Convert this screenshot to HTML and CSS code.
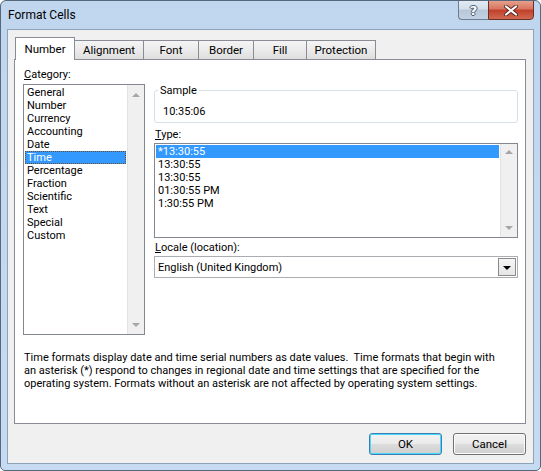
FILE: index.html
```html
<!DOCTYPE html>
<html>
<head>
<meta charset="utf-8">
<link rel="stylesheet" href="styles.css">
</head>
<body>
<div class="window">
  <div class="titlebar">
    <span class="title">Format Cells</span>
    <div class="caption-buttons">
      <span class="cap-btn help">?</span>
      <span class="cap-btn close">
        <svg width="16" height="11" viewBox="0 0 16 11">
          <path d="M3 1.5 L13 9.5 M13 1.5 L3 9.5" stroke="#5a2a22" stroke-width="4" stroke-linecap="round" fill="none"/>
          <path d="M3 1.5 L13 9.5 M13 1.5 L3 9.5" stroke="#ffffff" stroke-width="2.2" stroke-linecap="round" fill="none"/>
        </svg>
      </span>
    </div>
  </div>
  <div class="client">
    <div class="tabs">
      <span class="tab active w-number">Number</span>
      <span class="tab w-alignment">Alignment</span>
      <span class="tab w-font">Font</span>
      <span class="tab w-border">Border</span>
      <span class="tab w-fill">Fill</span>
      <span class="tab w-protection">Protection</span>
    </div>
    <div class="panel">
      <div class="columns">
        <div class="left">
          <div class="label"><u>C</u>ategory:</div>
          <div class="listbox cat">
            <div class="items">
              <div class="row">General</div>
              <div class="row">Number</div>
              <div class="row">Currency</div>
              <div class="row">Accounting</div>
              <div class="row">Date</div>
              <div class="row selected focus">Time</div>
              <div class="row">Percentage</div>
              <div class="row">Fraction</div>
              <div class="row">Scientific</div>
              <div class="row">Text</div>
              <div class="row">Special</div>
              <div class="row">Custom</div>
            </div>
            <div class="vscroll"><span class="arrow up"></span><span class="arrow down"></span></div>
          </div>
        </div>
        <div class="right">
          <fieldset class="sample">
            <legend>Sample</legend>
            <div class="sample-value">10:35:06</div>
          </fieldset>
          <div class="label type-label"><u>T</u>ype:</div>
          <div class="listbox type">
            <div class="items">
              <div class="row selected">*13:30:55</div>
              <div class="row">13:30:55</div>
              <div class="row">13:30:55</div>
              <div class="row">01:30:55 PM</div>
              <div class="row">1:30:55 PM</div>
            </div>
            <div class="vscroll"><span class="arrow up"></span><span class="arrow down"></span></div>
          </div>
          <div class="label locale-label"><u>L</u>ocale (location):</div>
          <div class="combo">
            <span class="combo-text">English (United Kingdom)</span>
            <span class="combo-btn"><span class="tri"></span></span>
          </div>
        </div>
      </div>
      <p class="desc">Time formats display date and time serial numbers as date values.&nbsp; Time formats that begin with<br>an asterisk (*) respond to changes in regional date and time settings that are specified for the<br>operating system. Formats without an asterisk are not affected by operating system settings.</p>
    </div>
    <div class="buttons">
      <button class="btn default">OK</button>
      <button class="btn">Cancel</button>
    </div>
  </div>
</div>
</body>
</html>
```

FILE: styles.css
```css
html, body {
  margin: 0;
  padding: 0;
  background: #ffffff;
}

body {
  font-family: Roboto, "Liberation Sans", sans-serif;
  font-size: 11px;
  color: #000;
}

.window {
  width: 541px;
  height: 471px;
  box-sizing: border-box;
  border: 1px solid #56687c;
  border-radius: 6px 6px 5px 5px;
  background: linear-gradient(to bottom, #c0d6ee 0%, #c6dbf1 100%);
  display: flex;
  flex-direction: column;
  overflow: hidden;
}

.titlebar {
  height: 28px;
  display: flex;
  align-items: flex-start;
  padding-left: 7px;
  flex-shrink: 0;
}

.title {
  font-size: 12px;
  line-height: 14px;
  margin-top: 7px;
  color: #000;
}

.caption-buttons {
  margin-left: auto;
  margin-right: 6px;
  display: flex;
  margin-top: -1px;
}

.cap-btn {
  height: 20px;
  box-sizing: border-box;
  display: flex;
  align-items: center;
  justify-content: center;
}

.help {
  width: 30px;
  border: 1px solid #6b7d91;
  border-right: none;
  border-radius: 0 0 0 4px;
  background: linear-gradient(to bottom, #e2eaf3 0%, #d3dfeb 45%, #b6c7d9 50%, #c3d2e2 100%);
  font-family: "DejaVu Sans", sans-serif;
  font-weight: bold;
  font-size: 13px;
  color: #ffffff;
  text-shadow: -1px 0 #4a5a6c, 1px 0 #4a5a6c, 0 -1px #4a5a6c, 0 1px #4a5a6c;
  padding-top: 1px;
}

.close {
  width: 46px;
  border: 1px solid #6a3028;
  border-radius: 0 0 4px 0;
  background: linear-gradient(to bottom, #e6a08c 0%, #d8735e 45%, #c23f2a 50%, #d06a52 100%);
}

.client {
  flex: 1;
  margin: 0 6px 6px 6px;
  border: 1px solid #8ea3ba;
  background: #f0f0f0;
  display: flex;
  flex-direction: column;
}

.tabs {
  display: flex;
  align-items: flex-end;
  margin-top: 7px;
  padding-left: 7px;
  height: 22px;
  position: relative;
  z-index: 1;
}

.tab {
  box-sizing: border-box;
  height: 19px;
  border: 1px solid #898c95;
  border-bottom: none;
  margin-left: -1px;
  background: linear-gradient(to bottom, #f4f4f4 0%, #ebebeb 50%, #dedede 100%);
  text-align: center;
  line-height: 18px;
  font-size: 11.5px;
}

.tab:first-child {
  margin-left: 0;
}

.tab.active {
  height: 23px;
  margin-bottom: -1px;
  background: #ffffff;
  line-height: 22px;
  position: relative;
  z-index: 2;
}

.w-number { width: 60px; }
.w-alignment { width: 70px; }
.w-font { width: 56px; }
.w-border { width: 56px; }
.w-fill { width: 54px; }
.w-protection { width: 70px; }

.panel {
  margin: 0 7px 0 6px;
  height: 365px;
  box-sizing: border-box;
  border: 1px solid #898c95;
  background: #ffffff;
  padding: 8px 7px 0 8px;
}

.columns {
  display: flex;
  gap: 9px;
}

.left {
  width: 122px;
}

.right {
  width: 364px;
}

.label {
  line-height: 13px;
  padding-left: 1px;
  height: 13px;
}

.label u {
  text-decoration: underline;
  text-underline-offset: 1px;
}

.listbox {
  box-sizing: border-box;
  border: 1px solid #828790;
  background: #ffffff;
  display: flex;
}

.listbox.cat {
  margin-top: 3px;
  height: 251px;
}

.items {
  flex: 1;
  padding: 1px;
}

.row {
  height: 13px;
  line-height: 13px;
  padding-left: 2px;
  box-sizing: border-box;
  white-space: nowrap;
}

.row.selected {
  background: #3399ff;
  color: #ffffff;
}

.row.focus {
  border: 1px dotted #6d4c2a;
  line-height: 11px;
  padding-left: 1px;
}

.vscroll {
  width: 17px;
  background: linear-gradient(to right, #e3e3e3 0, #e3e3e3 1px, #f0f0f0 1px, #f0f0f0 100%);
  display: flex;
  flex-direction: column;
  justify-content: space-between;
  align-items: center;
  padding: 8px 0 7px 1px;
  box-sizing: border-box;
}

.arrow {
  width: 0;
  height: 0;
  border-left: 4px solid transparent;
  border-right: 4px solid transparent;
}

.arrow.up {
  border-bottom: 4px solid #a6a6a6;
}

.arrow.down {
  border-top: 4px solid #a6a6a6;
}

.sample {
  margin: 16px 0 0 0;
  padding: 0 8px 3px 3px;
  border: 1px solid #d5dfe5;
  border-radius: 3px;
  height: 39px;
  box-sizing: border-box;
}

.sample legend {
  padding: 0 2px;
  line-height: 13px;
  font-size: 11px;
}

.sample-value {
  margin-top: 8px;
  margin-left: 5px;
  line-height: 13px;
}

.type-label {
  margin-top: 5px;
}

.listbox.type {
  margin-top: 2px;
  height: 95px;
}

.listbox.type .vscroll {
  padding: 6px 0 7px 1px;
}

.locale-label {
  margin-top: 3px;
}

.combo {
  margin-top: 2px;
  height: 22px;
  box-sizing: border-box;
  border: 1px solid #abadb3;
  display: flex;
  align-items: center;
  padding: 0 1px 0 3px;
  background: #ffffff;
}

.combo-text {
  flex: 1;
  line-height: 13px;
}

.combo-btn {
  width: 18px;
  height: 18px;
  box-sizing: border-box;
  border: 1px solid #8a8a8a;
  background: linear-gradient(to bottom, #f6f6f6 0%, #e6e6e6 100%);
  display: flex;
  align-items: center;
  justify-content: center;
}

.tri {
  width: 0;
  height: 0;
  border-left: 4px solid transparent;
  border-right: 4px solid transparent;
  border-top: 4px solid #000000;
  margin-top: 1px;
}

.desc {
  margin: 16px 0 0 0;
  padding-left: 1px;
  line-height: 13px;
  white-space: nowrap;
}

.buttons {
  display: flex;
  justify-content: flex-end;
  gap: 11px;
  margin-top: 9px;
  padding-right: 7px;
}

.btn {
  width: 73px;
  height: 22px;
  box-sizing: border-box;
  border: 1px solid #707070;
  border-radius: 3px;
  background: linear-gradient(to bottom, #f2f2f2 0%, #ebebeb 49%, #dddddd 50%, #cfcfcf 100%);
  font-family: Roboto, "Liberation Sans", sans-serif;
  font-size: 11.5px;
  color: #000;
  padding: 0;
  line-height: 18px;
  box-shadow: inset 0 0 0 1px #fcfcfc;
}

.btn.default {
  border-color: #3c7fb1;
  box-shadow: inset 0 0 0 1px #48d8fb;
}
```
